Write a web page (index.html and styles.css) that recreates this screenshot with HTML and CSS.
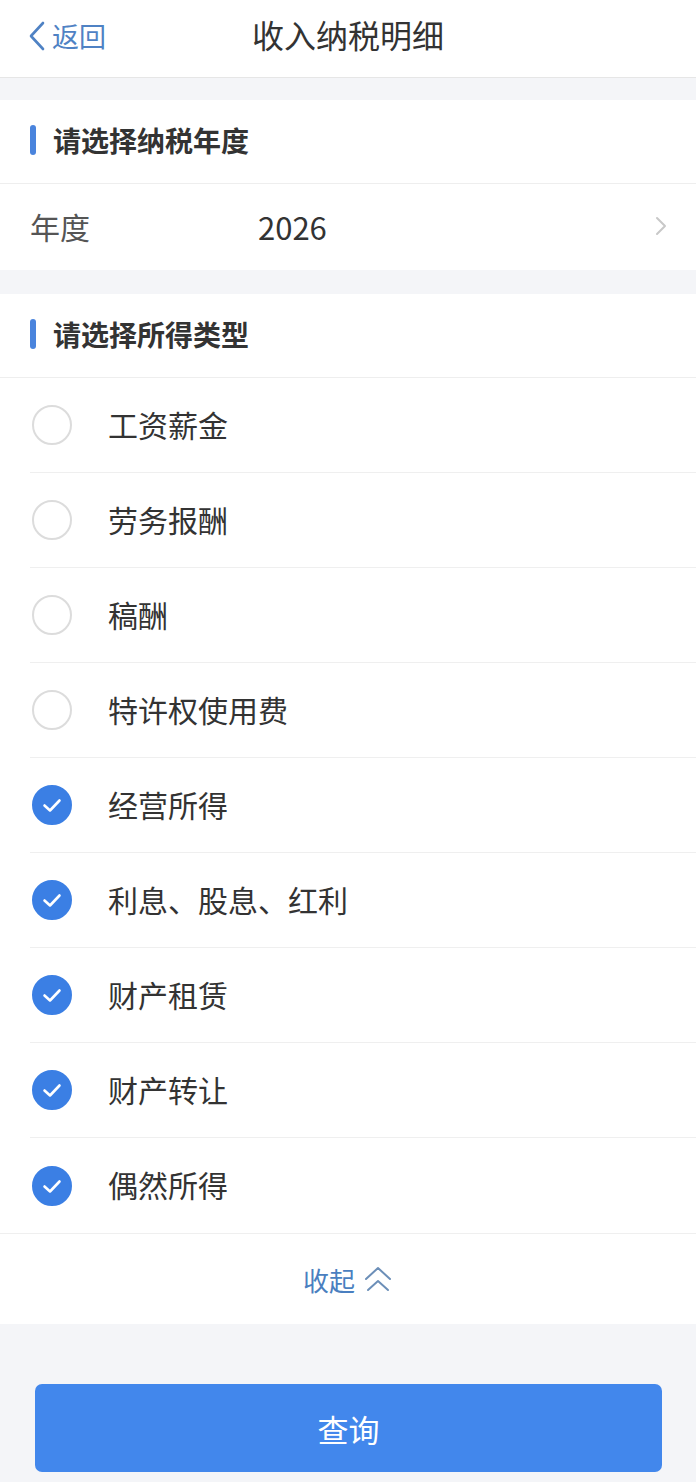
FILE: index.html
```html
<!DOCTYPE html>
<html lang="zh-CN">
<head>
    <meta charset="UTF-8" />
    <meta name="viewport" content="width=device-width, initial-scale=1.0" />
    <title>收入纳税明细</title>
    <link rel="stylesheet" href="styles.css">
</head>
<body>
<div class="page">
    <div class="header">
        <div class="back">
            <svg class="back-icon" width="20" height="30" viewBox="0 0 20 30">
                <path d="M16 2 L4 15 L16 28" fill="none" stroke="#4f82c4" stroke-width="2.6" stroke-linecap="round" stroke-linejoin="round"/>
            </svg>
            <span>返回</span>
        </div>
        <div class="title">收入纳税明细</div>
    </div>

    <div class="section">
        <div class="sec-title"><i class="bar"></i>请选择纳税年度</div>
        <div class="year-row">
            <span class="label">年度</span>
            <span class="value">2026</span>
            <svg class="arrow" width="14" height="24" viewBox="0 0 14 24">
                <path d="M3 4 L11 12 L3 20" fill="none" stroke="#c8c8c8" stroke-width="2" stroke-linecap="round" stroke-linejoin="round"/>
            </svg>
        </div>
    </div>

    <div class="section second">
        <div class="sec-title"><i class="bar"></i>请选择所得类型</div>
        <ul class="list" id="list"></ul>
        <div class="collapse">
            <span>收起</span>
            <svg width="30" height="30" viewBox="0 0 30 30">
                <path d="M3 15 L15 4 L27 15" fill="none" stroke="#6c8fb8" stroke-width="2" stroke-linecap="round" stroke-linejoin="round"/>
                <path d="M5 26 L15 17 L25 26" fill="none" stroke="#6c8fb8" stroke-width="2" stroke-linecap="round" stroke-linejoin="round"/>
            </svg>
        </div>
    </div>

    <div class="footer">
        <button class="btn">查询</button>
    </div>
</div>
<script>
    const items = [
        ['工资薪金', false],
        ['劳务报酬', false],
        ['稿酬', false],
        ['特许权使用费', false],
        ['经营所得', true],
        ['利息、股息、红利', true],
        ['财产租赁', true],
        ['财产转让', true],
        ['偶然所得', true]
    ];
    const $list = document.getElementById('list');
    const check = '<svg width="40" height="40" viewBox="0 0 40 40"><path d="M12.5 20.5 L18 25.5 L27.5 15.5" fill="none" stroke="#fff" stroke-width="2.6" stroke-linecap="round" stroke-linejoin="round"/></svg>';

    items.forEach(function (item) {
        const li = document.createElement('li');
        li.className = 'item';
        li.innerHTML = '<span class="radio' + (item[1] ? ' on' : '') + '">' + (item[1] ? check : '') + '</span>' +
            '<span class="name">' + item[0] + '</span>';
        li.addEventListener('click', function () {
            const $radio = li.querySelector('.radio');
            $radio.classList.toggle('on');
            $radio.innerHTML = $radio.classList.contains('on') ? check : '';
        });
        $list.appendChild(li);
    });
</script>
</body>
</html>
```

FILE: styles.css
```css
* {
    box-sizing: border-box;
}
body {
    margin: 0;
    background: #f4f5f8;
    font-family: "Noto Sans CJK SC", "Noto Sans", sans-serif;
    color: #333;
}
.page {
    width: 696px;
    min-height: 1482px;
}
.header {
    height: 78px;
    background: #fff;
    border-bottom: 1px solid #e6e6e6;
    position: relative;
    display: flex;
    align-items: center;
    justify-content: center;
}
.back {
    position: absolute;
    left: 27px;
    top: 18px;
    display: flex;
    align-items: center;
    gap: 5px;
    color: #4f82c4;
    font-size: 27px;
    line-height: 36px;
}
.title {
    font-size: 32px;
    color: #333;
    margin-top: -10px;
}
.section {
    background: #fff;
    margin-top: 22px;
}
.section.second {
    margin-top: 24px;
}
.sec-title {
    height: 84px;
    display: flex;
    align-items: center;
    padding-left: 30px;
    padding-bottom: 3px;
    font-size: 28px;
    font-weight: bold;
    color: #333;
    border-bottom: 1px solid #eeeeee;
}
.bar {
    display: inline-block;
    width: 6px;
    height: 30px;
    border-radius: 3px;
    background: #4a84dd;
    margin-right: 17px;
}
.year-row {
    height: 86px;
    display: flex;
    align-items: center;
    padding: 0 28px 2px 30px;
}
.year-row .label {
    font-size: 30px;
    color: #555;
    width: 228px;
}
.year-row .value {
    font-size: 31px;
    color: #333;
    flex: 1;
}
.list {
    list-style: none;
    margin: 0;
    padding: 0 0 0 30px;
}
.item {
    height: 95px;
    display: flex;
    align-items: center;
    border-bottom: 1px solid #efefef;
    cursor: pointer;
}
.item:last-child {
    border-bottom: none;
}
.radio {
    width: 40px;
    height: 40px;
    border-radius: 50%;
    border: 2px solid #dcdcdc;
    margin-left: 2px;
    margin-right: 36px;
    display: flex;
    align-items: center;
    justify-content: center;
    flex: none;
}
.radio.on {
    background: #3b7fe4;
    border-color: #3b7fe4;
}
.radio svg {
    flex: none;
}
.name {
    font-size: 30px;
    color: #333;
    margin-bottom: 3px;
}
.collapse {
    height: 91px;
    border-top: 1px solid #efefef;
    display: flex;
    align-items: center;
    justify-content: center;
    gap: 8px;
    font-size: 26px;
    color: #4a7fc0;
}
.footer {
    padding: 60px 34px 0 35px;
}
.btn {
    width: 100%;
    height: 88px;
    border: none;
    border-radius: 7px;
    background: #4287ec;
    color: #fff;
    font-size: 31px;
    font-family: "Noto Sans CJK SC", "Noto Sans", sans-serif;
}
```
